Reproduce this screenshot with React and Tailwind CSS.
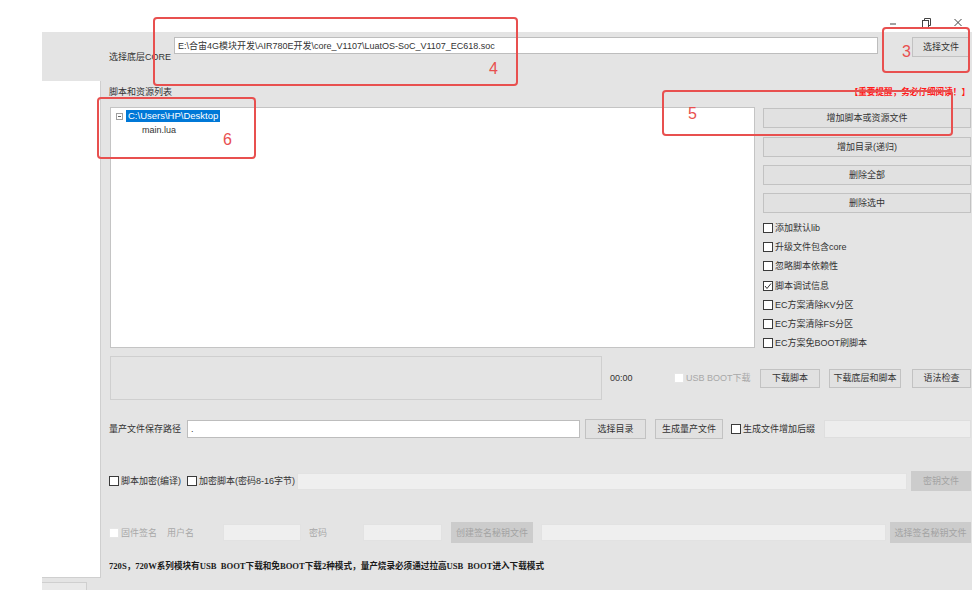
import React from 'react'

function Btn({ children, className = '', disabled = false }) {
    return (
        <div className={"flex shrink-0 items-center justify-center " + (disabled
            ? "bg-[#cccccc] text-[#a3a3a3] "
            : "border border-[#c2c2c2] bg-[#e1e1e1] text-[#333] ") + className}>
            {children}
        </div>
    )
}

function Check({ label, checked = false, disabled = false, className = '' }) {
    return (
        <div className={"flex shrink-0 items-center " + className}>
            <div className={"flex h-[10px] w-[10px] shrink-0 items-center justify-center bg-white border " + (disabled ? "border-[#e6e6e6]" : "border-[#3a3a3a]")}>
                {checked && (
                    <svg width="8" height="8" viewBox="0 0 8 8">
                        <polyline points="1,4 3,6.5 7,1.5" fill="none" stroke="#333" strokeWidth="1"/>
                    </svg>
                )}
            </div>
            <span className={"ml-[2px] whitespace-nowrap " + (disabled ? "text-[#a8a8a8]" : "text-[#333]")}>{label}</span>
        </div>
    )
}

function RedBox({ className, num, numClass }) {
    return (
        <div className={"absolute rounded-[4px] border-2 border-[#e8504f] " + className}>
            <span className={"absolute text-[16px] leading-none text-[#e8504f] " + numClass}>{num}</span>
        </div>
    )
}

export default function App() {
    return (
        <div className="relative h-[609px] w-[977px] overflow-hidden bg-white font-['Liberation_Sans','Noto_Sans_CJK_SC',sans-serif] text-[9px] leading-[12px] text-[#333]">
            {/* window controls */}
            <div className="flex h-[32px] justify-end gap-[22px] pr-[14px] pt-[18px]">
                <svg width="10" height="10" viewBox="0 0 10 10">
                    <line x1="1" y1="6" x2="7" y2="6" stroke="#444" strokeWidth="1"/>
                </svg>
                <svg width="10" height="10" viewBox="0 0 10 10">
                    <rect x="1.5" y="2.5" width="6" height="7" fill="none" stroke="#444" strokeWidth="1"/>
                    <polyline points="3.5,2.5 3.5,0.5 9.5,0.5 9.5,7.5 7.5,7.5" fill="none" stroke="#444" strokeWidth="1"/>
                </svg>
                <svg width="10" height="10" viewBox="0 0 10 10">
                    <line x1="1.5" y1="1" x2="8.5" y2="8" stroke="#444" strokeWidth="1"/>
                    <line x1="8.5" y1="1" x2="1.5" y2="8" stroke="#444" strokeWidth="1"/>
                </svg>
            </div>

            <div className="ml-[42px] flex h-[558px] w-[930px] flex-col bg-[#e4e4e4]">
                {/* core row */}
                <div className="flex h-[49px] items-start pl-[67px] pt-[5px]">
                    <span className="mt-[14px] w-[65px] shrink-0 whitespace-nowrap">选择底层CORE</span>
                    <div className="flex h-[17px] w-[704px] shrink-0 items-center border border-[#bdbdbd] bg-white pl-[3px] whitespace-nowrap">
                        E:\合宙4G模块开发\AIR780E开发\core_V1107\LuatOS-SoC_V1107_EC618.soc
                    </div>
                    <Btn className="ml-[34px] h-[20px] w-[58px]">选择文件</Btn>
                </div>

                <div className="flex flex-1">
                    {/* left pane */}
                    <div className="flex w-[59px] shrink-0 flex-col">
                        <div className="h-[497px] border-b border-r border-[#cfcfcf] bg-white"></div>
                        <div className="mt-[4px] h-[8px] w-[45px] border-r border-t border-[#cfcfcf] bg-[#e9e9e9]"></div>
                    </div>

                    {/* main area */}
                    <div className="flex flex-1 flex-col pl-[8px] pr-[1px] pt-[5px]">
                        <div className="flex h-[12px] items-center justify-between">
                            <span>脚本和资源列表</span>
                            <span className="mr-[1px] text-[8.6px] font-bold text-[#ff1a1a]">【重要提醒，务必仔细阅读！】</span>
                        </div>

                        <div className="mt-[9px] flex h-[241px]">
                            <div className="ml-[1px] h-[241px] w-[645px] shrink-0 border border-[#c4c4c4] bg-white pl-[5px] pt-[2px]">
                                <div className="flex h-[12px] items-center">
                                    <div className="flex h-[7px] w-[7px] items-center justify-center border border-[#a0a0a0]">
                                        <div className="h-px w-[3px] bg-[#666]"></div>
                                    </div>
                                    <span className="ml-[3px] bg-[#0078d7] px-[2px] text-[9.5px] text-white">C:\Users\HP\Desktop</span>
                                </div>
                                <div className="ml-[26px] mt-[2px] h-[12px]">main.lua</div>
                            </div>

                            <div className="ml-[8px] flex w-[208px] shrink-0 flex-col">
                                <Btn className="mt-[1px] h-[20px]">增加脚本或资源文件</Btn>
                                <Btn className="mt-[9px] h-[20px]">增加目录(递归)</Btn>
                                <Btn className="mt-[8px] h-[20px]">删除全部</Btn>
                                <Btn className="mt-[8px] h-[20px]">删除选中</Btn>
                                <div className="mt-[5px] flex flex-col">
                                    <Check className="h-[19.3px]" label="添加默认lib"/>
                                    <Check className="h-[19.3px]" label="升级文件包含core"/>
                                    <Check className="h-[19.3px]" label="忽略脚本依赖性"/>
                                    <Check className="h-[19.3px]" label="脚本调试信息" checked/>
                                    <Check className="h-[19.3px]" label="EC方案清除KV分区"/>
                                    <Check className="h-[19.3px]" label="EC方案清除FS分区"/>
                                    <Check className="h-[19.3px]" label="EC方案免BOOT刷脚本"/>
                                </div>
                            </div>
                        </div>

                        {/* log row */}
                        <div className="mt-[8px] flex h-[44px] items-center">
                            <div className="ml-[1px] h-[44px] w-[492px] shrink-0 border border-[#cfcfcf]"></div>
                            <span className="ml-[8px] w-[64px] shrink-0">00:00</span>
                            <Check className="w-[86px]" label="USB BOOT下载" disabled/>
                            <Btn className="h-[19px] w-[60px]">下载脚本</Btn>
                            <Btn className="ml-[9px] h-[19px] w-[72px]">下载底层和脚本</Btn>
                            <Btn className="ml-[11px] h-[19px] w-[59px]">语法检查</Btn>
                        </div>

                        {/* mass production row */}
                        <div className="mt-[19px] flex h-[20px] items-center">
                            <span className="w-[78px] shrink-0 whitespace-nowrap">量产文件保存路径</span>
                            <div className="flex h-[18px] w-[393px] shrink-0 items-center border border-[#bdbdbd] bg-white pl-[3px]">.</div>
                            <Btn className="ml-[5px] h-[20px] w-[61px]">选择目录</Btn>
                            <Btn className="ml-[9px] h-[20px] w-[68px]">生成量产文件</Btn>
                            <Check className="ml-[8px] w-[93px]" label="生成文件增加后缀"/>
                            <div className="h-[18px] w-[147px] shrink-0 border border-[#dedede] bg-[#ededed]"></div>
                        </div>

                        {/* encrypt row */}
                        <div className="mt-[32px] flex h-[20px] items-center">
                            <Check className="w-[78px]" label="脚本加密(编译)"/>
                            <Check className="w-[110px]" label="加密脚本(密码8-16字节)"/>
                            <div className="h-[17px] w-[610px] shrink-0 border border-[#e2e2e2] bg-[#efefef]"></div>
                            <Btn disabled className="ml-[4px] h-[20px] w-[60px]">密钥文件</Btn>
                        </div>

                        {/* signature row */}
                        <div className="mt-[31px] flex h-[21px] items-center text-[#a8a8a8]">
                            <Check className="w-[58px]" label="固件签名" disabled/>
                            <span className="w-[56px] shrink-0">用户名</span>
                            <div className="h-[17px] w-[78px] shrink-0 border border-[#e2e2e2] bg-[#efefef]"></div>
                            <span className="ml-[8px] w-[54px] shrink-0">密码</span>
                            <div className="h-[17px] w-[79px] shrink-0 border border-[#e2e2e2] bg-[#efefef]"></div>
                            <Btn disabled className="ml-[9px] h-[21px] w-[82px]">创建签名秘钥文件</Btn>
                            <div className="ml-[8px] h-[17px] w-[345px] shrink-0 border border-[#e2e2e2] bg-[#efefef]"></div>
                            <Btn disabled className="ml-[4px] h-[21px] w-[81px]">选择签名秘钥文件</Btn>
                        </div>

                        <div className="mt-[17px] h-[12px] whitespace-nowrap font-['Liberation_Serif','Noto_Sans_CJK_SC',serif] text-[8.6px] font-bold text-[#1a1a1a]">
                            720S，720W系列模块有USB&nbsp;&nbsp;BOOT下载和免BOOT下载2种模式，量产烧录必须通过拉高USB&nbsp;&nbsp;BOOT进入下载模式
                        </div>
                    </div>
                </div>
            </div>

            {/* annotation boxes */}
            <RedBox className="left-[153px] top-[17px] h-[69px] w-[365px]" num="4" numClass="left-[334px] top-[42px]"/>
            <RedBox className="left-[882px] top-[27px] h-[46px] w-[88px]" num="3" numClass="left-[18px] top-[15px]"/>
            <RedBox className="left-[662px] top-[90px] h-[46px] w-[291px]" num="5" numClass="left-[24px] top-[14px]"/>
            <RedBox className="left-[97px] top-[97px] h-[62px] w-[159px]" num="6" numClass="left-[124px] top-[33px]"/>
        </div>
    )
}
